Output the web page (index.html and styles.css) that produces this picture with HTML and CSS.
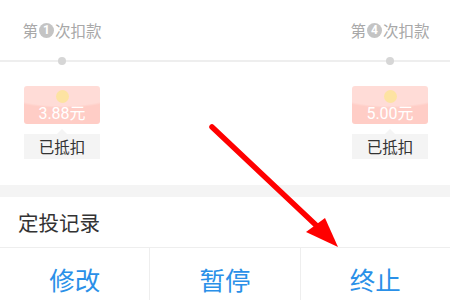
FILE: index.html
```html
<!DOCTYPE html>
<html lang="zh">
<head>
<meta charset="utf-8">
<link rel="stylesheet" href="styles.css">
</head>
<body>
<div class="page">
  <section class="timeline">
    <div class="row titles">
      <div class="col"><span class="title">第<span class="badge">1</span>次扣款</span></div>
      <div class="col"><span class="title">第<span class="badge">4</span>次扣款</span></div>
    </div>
    <div class="row track">
      <div class="col"><span class="dot"></span></div>
      <div class="col"><span class="dot"></span></div>
    </div>
    <div class="row cards">
      <div class="col">
        <div class="packet"><span class="coin"></span><span class="amount">3.88元</span></div>
        <div class="status">已抵扣</div>
      </div>
      <div class="col">
        <div class="packet"><span class="coin"></span><span class="amount">5.00元</span></div>
        <div class="status">已抵扣</div>
      </div>
    </div>
  </section>
  <div class="band"></div>
  <div class="record">定投记录</div>
  <nav class="actions">
    <div class="action">修改</div>
    <div class="action">暂停</div>
    <div class="action">终止</div>
  </nav>
  <svg class="arrow" width="450" height="300" viewBox="0 0 450 300">
    <line x1="212" y1="127" x2="318" y2="227" stroke="#ff0000" stroke-width="5.5" stroke-linecap="round"/>
    <polygon points="306,232 325,218 338,247" fill="#ff0000"/>
  </svg>
</div>
</body>
</html>
```
FILE: styles.css
```css
* { box-sizing: border-box; }
html, body { margin: 0; padding: 0; background: #fff; }
body {
  font-family: "Noto Sans CJK SC", "Noto Sans", Roboto, sans-serif;
  width: 450px;
  height: 300px;
  overflow: hidden;
}
.page { position: relative; width: 450px; height: 300px; overflow: hidden; }

.timeline { height: 185px; padding-top: 20px; }
.row { display: flex; justify-content: space-between; padding: 0 21px 0 23px; }
.col { width: 78px; display: flex; flex-direction: column; align-items: center; }

.title {
  font-size: 15.5px; line-height: 20px; color: #a8a8a8; white-space: nowrap;
  display: inline-flex; align-items: center;
}
.badge {
  display: inline-flex; align-items: center; justify-content: center;
  width: 15px; height: 15px; border-radius: 50%;
  background: #c4c4c4; color: #fff; font-size: 12px; font-family: Roboto, sans-serif;
  font-weight: 700; line-height: 1; margin: 0 1px;
}

.track {
  margin-top: 17px; height: 8px;
  background: linear-gradient(#fff 0 3px, #eeeeee 3px 5px, #fff 5px);
}
.dot { width: 8px; height: 8px; border-radius: 50%; background: #d6d6d6; }

.cards { margin-top: 21px; }
.packet {
  width: 76px; height: 38px; border-radius: 3px;
  background:
    radial-gradient(ellipse 70px 22px at 50% 0, #ffdcd7 0 90%, transparent 100%),
    #ffcdc6;
  display: flex; flex-direction: column; align-items: center;
  padding-top: 4px;
}
.coin { width: 13px; height: 13px; border-radius: 50%; background: #fde3a2; }
.amount {
  color: #fff; font-family: Roboto, "Noto Sans CJK SC", sans-serif;
  font-size: 16px; line-height: 18px; margin-top: 2px;
}
.status {
  position: relative;
  margin-top: 10px; width: 76px; height: 25px;
  background: #f4f4f4; color: #333;
  font-size: 15.5px; line-height: 25px; text-align: center;
}
.status::before {
  content: ""; position: absolute; left: 50%; top: -5px; margin-left: -5px;
  border-left: 5px solid transparent; border-right: 5px solid transparent;
  border-bottom: 5px solid #f4f4f4;
}

.band { height: 12px; background: #f4f4f4; }
.record {
  height: 51px; padding-left: 18px;
  font-size: 20.5px; line-height: 51px; color: #333;
  border-bottom: 1px solid #eeeeee;
}
.actions { display: flex; height: 60px; }
.action {
  flex: 1; display: flex; align-items: center; justify-content: center;
  font-size: 25.5px; color: #2a90e8;
}
.action + .action { border-left: 1px solid #eeeeee; }

.arrow { position: absolute; left: 0; top: 0; pointer-events: none; }
```
